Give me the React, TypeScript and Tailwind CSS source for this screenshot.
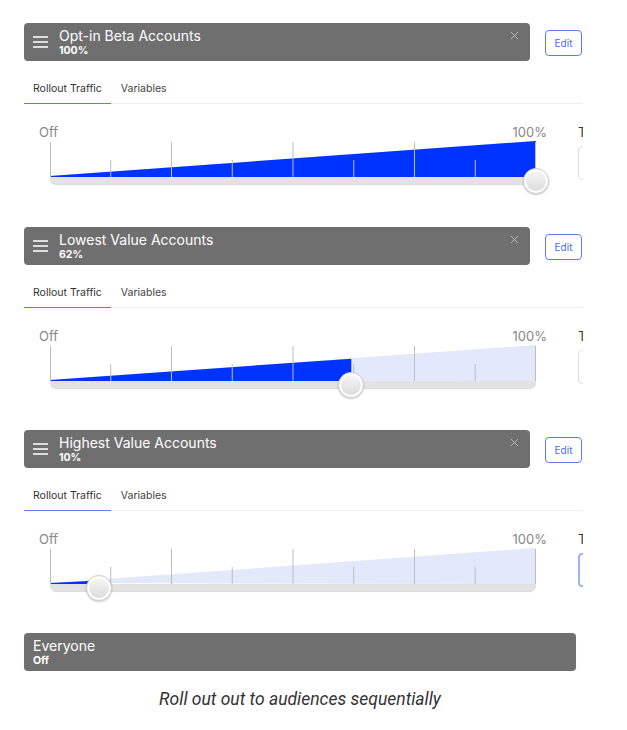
import { IoCloseOutline } from "react-icons/io5";

interface Audience {
  name: string;
  pct: number;
  focused?: boolean;
  gap: string;
}

const audiences: Audience[] = [
  { name: "Opt-in Beta Accounts", pct: 100, gap: "mb-[43px]" },
  { name: "Lowest Value Accounts", pct: 62, gap: "mb-[42px]" },
  { name: "Highest Value Accounts", pct: 10, focused: true, gap: "mb-[42px]" },
];

const W = 486;
const H = 36;

const Wedge = ({ pct }: { pct: number }) => {
  const x = (pct / 100) * W;
  const y = H - (H * x) / W;
  const ticks = Array.from({ length: 9 }, (_, i) => i);
  return (
    <svg width={W} height={H} className="block">
      <polygon points={`0,${H - 1} ${W},0 ${W},${H}`} fill="#e3e9fb" />
      <polygon points={`0,${H - 1} ${x},${y} ${x},${H} 0,${H}`} fill="#0033ff" />
      {ticks.map((i) => {
        const tx = i === 8 ? W - 0.5 : i === 0 ? 0.5 : i * (W / 8);
        return (
          <line
            key={i}
            x1={tx}
            x2={tx}
            y1={i % 2 === 0 ? 1 : 19}
            y2={H}
            stroke="#bdbdbd"
            strokeWidth={1}
          />
        );
      })}
    </svg>
  );
};

const Section = ({ a }: { a: Audience }) => (
  <div className={`flex flex-col ${a.gap}`}>
    <div className="flex items-start">
      <div className="relative flex items-center w-[506px] h-[38px] rounded-[4px] bg-[#6f6f6f] pl-[9px] shrink-0">
        <div className="flex flex-col gap-[3.5px] w-[15px] mr-[11px]">
          <span className="h-[1.5px] bg-[#dddddd]" />
          <span className="h-[1.5px] bg-[#dddddd]" />
          <span className="h-[1.5px] bg-[#dddddd]" />
        </div>
        <div className="flex flex-col">
          <p className="text-[14px] leading-[17px] text-white">{a.name}</p>
          <p className="text-[10.5px] leading-[13px] font-bold text-white">{a.pct}%</p>
        </div>
        <IoCloseOutline className="absolute top-[5px] right-[8px] text-[15px] text-[#bdbdbd]" />
      </div>
      <button className="ml-[15px] mt-[7px] w-[37px] h-[26px] shrink-0 rounded-[4px] border-[1.5px] border-[#5b7bf7] text-[10px] text-[#4a6cf0] bg-white">
        Edit
      </button>
    </div>

    <div className="mt-[17px] flex border-b border-[#eeeeee] w-[559px]">
      <div className="px-[9px] pt-[5px] pb-[8px] border-b-[1.5px] border-[#5b7bf7] -mb-px text-[10.5px] leading-[12px] text-[#333333]">
        Rollout Traffic
      </div>
      <div className="px-[10px] pt-[5px] pb-[8px] text-[10.5px] leading-[12px] text-[#444444]">
        Variables
      </div>
    </div>

    <div className="flex pt-[20px]">
      <div className="w-[554px] shrink-0 flex flex-col">
        <div className="flex justify-between pl-[15px] pr-[31px] text-[13px] leading-[16px] text-[#888888]">
          <span>Off</span>
          <span>100%</span>
        </div>
        <div className="relative ml-[26px] mt-[1px] w-[486px]">
          <Wedge pct={a.pct} />
          <div className="h-[7px] bg-[#e2e2e2] rounded-b-[6px] shadow-[0_1px_1px_rgba(0,0,0,0.15)]" />
          <div
            className="absolute top-[27px] w-[26px] h-[26px] rounded-full border border-[#cfcfcf] bg-white shadow-[0_1px_2px_rgba(0,0,0,0.2)] flex items-center justify-center"
            style={{ left: (a.pct / 100) * W - 13 }}
          >
            <div className="w-[20px] h-[20px] rounded-full bg-gradient-to-b from-[#f6f6f6] to-[#dcdcdc]" />
          </div>
        </div>
      </div>
      <div className="flex flex-col shrink-0">
        <span className="text-[13px] leading-[16px] text-[#333333]">T</span>
        <div
          className={`mt-[6px] w-[40px] h-[34px] rounded-[4px] border ${
            a.focused ? "border-[#9fb3fb] border-2" : "border-[#dddddd]"
          }`}
        />
      </div>
    </div>
  </div>
);

export default function App() {
  return (
    <div className="w-[627px] h-[730px] bg-white" style={{ fontFamily: "Inter, 'Noto Sans', sans-serif" }}>
      <div className="pl-[24px] pt-[23px] w-[583px] overflow-hidden">
        <div className="flex flex-col">
          {audiences.map((a) => (
            <Section key={a.name} a={a} />
          ))}
          <div className="w-[552px] h-[38px] rounded-[4px] bg-[#6f6f6f] pl-[9px] flex flex-col justify-center shadow-[0_2px_2px_rgba(0,0,0,0.06)]">
            <p className="text-[14px] leading-[17px] text-white">Everyone</p>
            <p className="text-[10.5px] leading-[13px] font-bold text-white">Off</p>
          </div>
        </div>
      </div>
      <p
        className="mt-[18px] text-center text-[17.5px] leading-[20px] italic text-[#333333] pr-[27px]"
        style={{ fontFamily: "Roboto, sans-serif" }}
      >
        Roll out out to audiences sequentially
      </p>
    </div>
  );
}
